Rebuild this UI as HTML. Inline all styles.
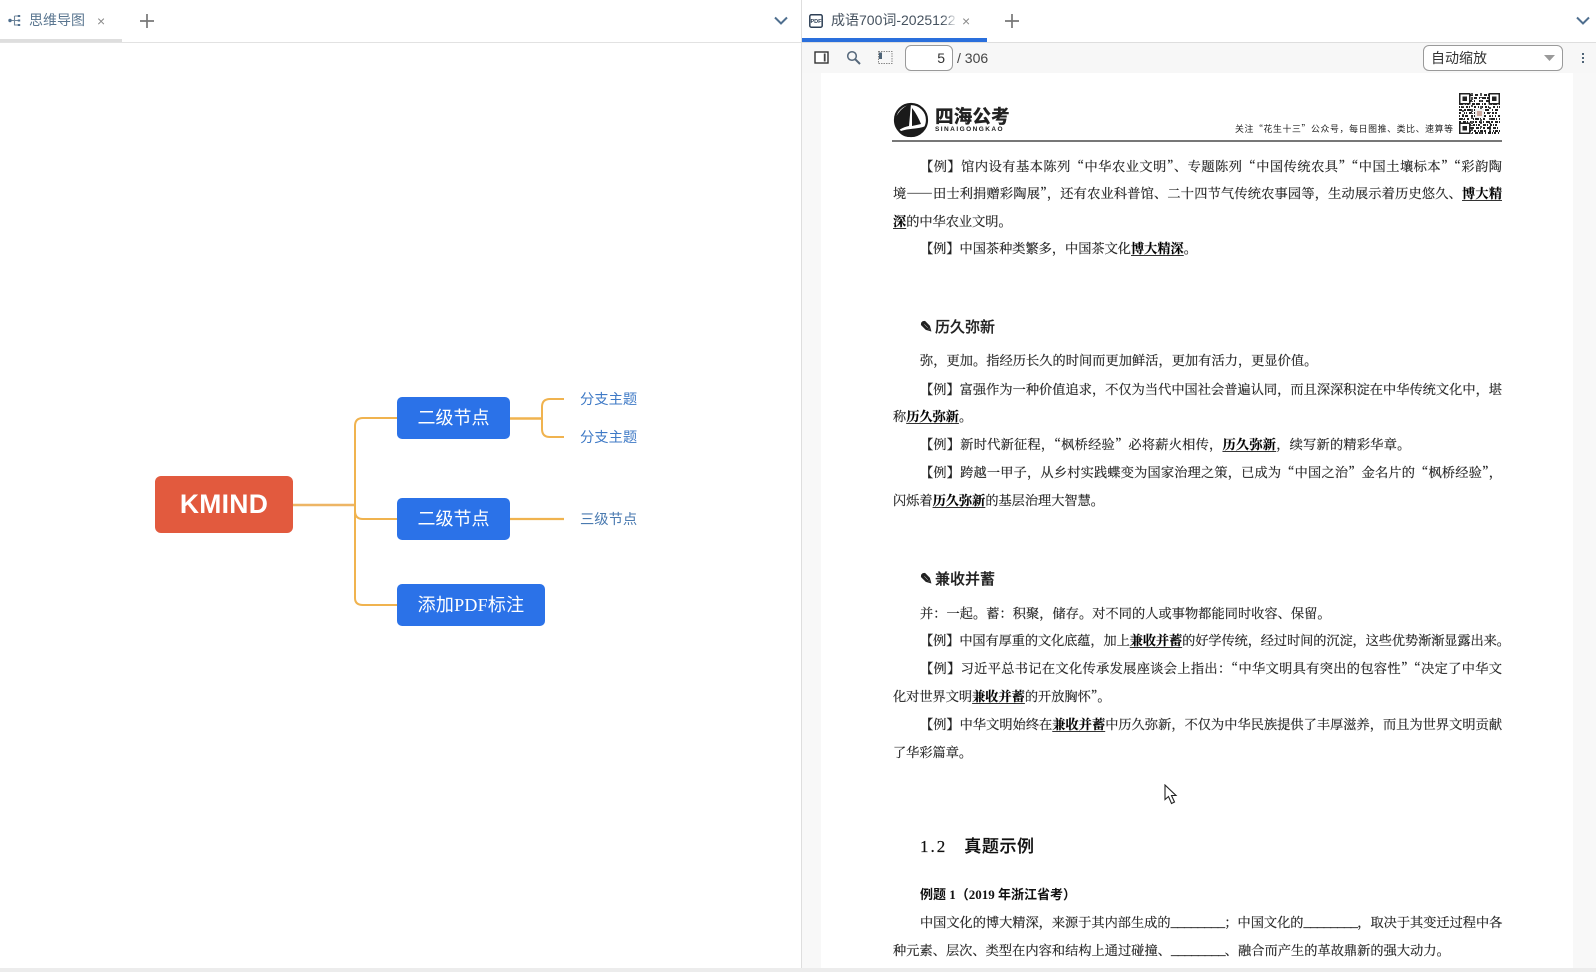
<!DOCTYPE html>
<html lang="zh-CN"><head><meta charset="utf-8"><title>KMIND</title>
<style>
html,body{margin:0;padding:0;width:1596px;height:972px;overflow:hidden;background:#fff}
*{box-sizing:border-box}
body{font-family:"Liberation Sans","Noto Sans CJK SC",sans-serif;position:relative}
.a{position:absolute}
.t{position:absolute;left:893px;width:609px;height:20px;margin-top:-1px;line-height:20px;font-family:"Noto Serif CJK SC","Liberation Serif",serif;font-size:13.2px;color:#222;white-space:nowrap;-webkit-text-stroke:.2px #333;filter:blur(.25px)}
.j{text-align:justify;text-align-last:justify}
.i{left:920px;width:582px}
.t u{font-weight:700;color:#000;text-underline-offset:2px}
.t s{text-decoration:none;letter-spacing:-.7px}
.h{position:absolute;left:920px;height:22px;line-height:22px;font-size:15px;font-weight:500;color:#222;white-space:nowrap;font-family:"Noto Sans CJK SC",sans-serif;-webkit-text-stroke:.2px #222}
.h span{display:inline-block;width:15px;font-family:"DejaVu Sans",sans-serif;font-size:15px;-webkit-text-stroke:.8px #222}
.n{position:absolute;background:#2b72e8;border-radius:5px;color:#fff;font-size:18px;text-align:center;line-height:43px;height:42px;left:397px}
.n b{font:400 18px "Liberation Serif",serif}
.l{position:absolute;left:580px;font-size:14.300px;line-height:20px;color:#3f7ac6;white-space:nowrap}
</style></head><body>
<!-- left tab bar -->
<div class="a" style="left:0;top:42px;width:801px;height:1px;background:#e2e2e2"></div>
<div class="a" style="left:0;top:39px;width:122px;height:3px;background:#dedede"></div>
<svg class="a" style="left:8px;top:14px" width="14" height="14" viewBox="0 0 14 14"><circle cx="2" cy="6.500" r="1.700" fill="#4f6f8f"/><path d="M3.500 6.500H11M6.500 2H11M6.500 2V11H11" fill="none" stroke="#6f8599" stroke-width="1.100"/><rect x="9.800" y="1" width="2.400" height="2" fill="#4f6f8f"/><rect x="9.800" y="5.500" width="2.400" height="2" fill="#4f6f8f"/><rect x="9.800" y="10" width="2.400" height="2" fill="#4f6f8f"/></svg>
<div class="a" style="left:29px;top:10px;font-size:14px;line-height:21px;color:#5a7690;white-space:nowrap">思维导图</div>
<div class="a" style="left:97px;top:11px;font-size:14px;line-height:20px;color:#8a8a8a">×</div>
<svg class="a" style="left:140px;top:14px" width="14" height="14"><path d="M7 0V14M0 7H14" stroke="#777" stroke-width="1.700"/></svg>
<svg class="a" style="left:773px;top:16px" width="16" height="10"><path d="M2 1.500L8 7.500L14 1.500" fill="none" stroke="#4f6f8f" stroke-width="2"/></svg>
<div class="a" style="left:801px;top:0;width:1px;height:968px;background:#dedede"></div>
<!-- mind map -->
<svg class="a" style="left:0;top:0" width="801" height="972"><g fill="none" stroke="#f0b34f" stroke-width="2">
<path d="M292 505H355" stroke-width="2.400" stroke="#edb565"/>
<path d="M397 418H363Q355 418 355 426V598Q355 605 363 605H397"/>
<path d="M355 511Q355 519 363 519H397"/>
<path d="M510 418.500H542" stroke-width="2.600"/>
<path d="M564 399H550Q542 399 542 407V429Q542 437 550 437H564"/>
<path d="M510 519H564" stroke-width="2.200"/>
</g></svg>
<div class="a" style="left:155px;top:476px;width:138px;height:57px;background:#e25a3e;border-radius:6px;color:#fff;font-weight:700;font-size:26.500px;text-align:center;line-height:57px;letter-spacing:.3px">KMIND</div>
<div class="n" style="top:397px;width:113px">二级节点</div>
<div class="n" style="top:498px;width:113px">二级节点</div>
<div class="n" style="top:584px;width:148px;letter-spacing:.25px">添加<b>PDF</b>标注</div>
<div class="l" style="top:390px">分支主题</div>
<div class="l" style="top:428px">分支主题</div>
<div class="l" style="top:510px;color:#4a7ab0">三级节点</div>
<!-- right tab bar -->
<div class="a" style="left:802px;top:42px;width:794px;height:31px;background:#f7f7f7;border-top:1px solid #dedede"></div>
<div class="a" style="left:802px;top:38px;width:185px;height:4px;background:#2a6fdc"></div>
<svg class="a" style="left:809px;top:14px" width="14" height="14" viewBox="0 0 14 14"><rect x=".8" y=".8" width="12.400" height="12.400" rx="1.500" fill="#fff" stroke="#2d3f55" stroke-width="1.500"/><text x="7" y="9" text-anchor="middle" font-family="Liberation Sans" font-weight="700" font-size="5.500" fill="#2d3f55">PDF</text></svg>
<div class="a" style="left:831px;top:10px;width:125px;overflow:hidden;font-size:14px;line-height:21px;color:#46525f;white-space:nowrap">成语700词-2025122</div>
<div class="a" style="left:942px;top:8px;width:16px;height:24px;background:linear-gradient(90deg,rgba(255,255,255,0),#fff)"></div>
<div class="a" style="left:962px;top:11px;font-size:14px;line-height:20px;color:#8a8a8a">×</div>
<svg class="a" style="left:1005px;top:14px" width="14" height="14"><path d="M7 0V14M0 7H14" stroke="#777" stroke-width="1.700"/></svg>
<svg class="a" style="left:1575px;top:16px" width="16" height="10"><path d="M2 1.500L8 7.500L14 1.500" fill="none" stroke="#4f6f8f" stroke-width="2"/></svg>
<!-- toolbar -->
<svg class="a" style="left:814px;top:51px" width="15" height="13"><rect x="1" y="1" width="13" height="11" fill="#fff" stroke="#333" stroke-width="1.400"/><rect x="9.800" y="2.500" width="1.800" height="8" fill="#444"/></svg>
<svg class="a" style="left:846px;top:50px" width="15" height="15"><circle cx="6" cy="6" r="4.300" fill="none" stroke="#55677a" stroke-width="1.500"/><path d="M9.300 9.300L14 14" stroke="#55677a" stroke-width="2"/></svg>
<svg class="a" style="left:878px;top:51px" width="15" height="13"><rect x=".5" y=".5" width="13.500" height="12" fill="none" stroke="#888" stroke-dasharray="1.500 1"/><rect x="1" y="1.500" width="3" height="6.500" fill="#4f6477"/></svg>
<div class="a" style="left:905px;top:45px;width:48px;height:26px;background:#fff;border:1px solid #9a9a9a;border-radius:6px;text-align:right;padding-right:7px;font-size:14px;line-height:24px;color:#333">5</div>
<div class="a" style="left:957px;top:47px;font-size:14px;line-height:22px;color:#444">/ 306</div>
<div class="a" style="left:1423px;top:45px;width:140px;height:26px;background:#fff;border:1px solid #9a9a9a;border-radius:6px;padding-left:7px;font-size:14px;line-height:24px;color:#333">自动缩放</div>
<svg class="a" style="left:1544px;top:55px" width="12" height="7"><path d="M0 0H11L5.500 6Z" fill="#9a9a9a"/></svg>
<svg class="a" style="left:1581px;top:53px" width="4" height="11"><rect x="1" y="0" width="2" height="2" fill="#4f6477"/><rect x="1" y="4" width="2" height="2" fill="#4f6477"/><rect x="1" y="8" width="2" height="2" fill="#4f6477"/></svg>
<!-- pdf viewer -->
<div class="a" style="left:802px;top:73px;width:794px;height:895px;background:#f8f8f8"></div>
<div class="a" style="left:821px;top:73px;width:752px;height:895px;background:#fff"></div>
<div class="a" style="left:0;top:968px;width:1596px;height:4px;background:#ececec"></div>
<!-- logo -->
<svg class="a" style="left:893px;top:102px" width="36" height="36" viewBox="0 0 36 36"><circle cx="18" cy="18" r="16" fill="none" stroke="#1a1a1a" stroke-width="2.200"/><path d="M18 2L16 24C11 25 7 27 5 29C3 24 2 19 3 15C6 9 11 4 18 2Z" fill="#1a1a1a"/><path d="M19 6C23 11 26 17 28 22L19 24ZM6 30C13 26 22 28 33 24C31 31 24 35 17 35C12 35 8 33 6 30Z" fill="#1a1a1a"/></svg>
<div class="a" style="left:935px;top:104px;width:75px;font-size:18.700px;line-height:23px;font-weight:900;color:#222;white-space:nowrap;font-family:'Noto Sans CJK SC',sans-serif">四海公考</div>
<div class="a" style="left:935px;top:126px;width:75px;font-size:6.500px;line-height:8px;font-weight:700;color:#222;letter-spacing:1.450px;white-space:nowrap">SINAIGONGKAO</div>
<div class="a" style="left:1235px;top:122px;width:218px;font-family:'Noto Sans CJK SC',sans-serif;font-size:8.900px;line-height:14px;color:#222;white-space:nowrap;text-align:justify;text-align-last:justify">关注“花生十三”公众号，每日图推、类比、速算等</div>
<!-- QR -->
<svg class="a" style="left:1459px;top:93px;filter:blur(.35px)" width="41" height="41" viewBox="0 0 41 41" shape-rendering="crispEdges">
<g fill="none" stroke="#222" stroke-width="1.800">
<path d="M0 2H41" stroke-dasharray="3 1 2 2 1 1 4 2 3 2 1 3"/><path d="M0 5H41" stroke-dasharray="1 2 4 1 2 3 1 1 3 2"/><path d="M0 8H41" stroke-dasharray="2 1 1 3 3 1 2 2 1 4"/>
<path d="M0 11H41" stroke-dasharray="4 2 1 1 2 3 3 1"/><path d="M0 14H41" stroke-dasharray="1 1 3 2 2 1 1 4 2 2"/><path d="M0 17H41" stroke-dasharray="3 2 2 1 4 3 1 2"/>
<path d="M0 20H41" stroke-dasharray="2 3 1 1 1 2 3 2 2 1"/><path d="M0 23H41" stroke-dasharray="1 2 2 1 3 3 2 1 1 2"/><path d="M0 26H41" stroke-dasharray="4 1 1 2 2 4 1 1"/>
<path d="M0 29H41" stroke-dasharray="2 2 3 1 1 2 4 1"/><path d="M0 32H41" stroke-dasharray="1 1 2 3 3 1 1 2 2 1"/><path d="M0 35H41" stroke-dasharray="3 1 1 2 2 2 4 2"/><path d="M0 38H41" stroke-dasharray="2 2 1 1 3 1 2 3"/><path d="M0 40H41" stroke-dasharray="1 2 3 1 1 1 2 2"/>
<path d="M4 0V41" stroke-dasharray="1 3 2 2 1 4" stroke="#555"/><path d="M13 0V41" stroke-dasharray="2 2 3 1 1 3" stroke="#555"/><path d="M22 0V41" stroke-dasharray="3 1 1 2 2 4" stroke="#555"/><path d="M31 0V41" stroke-dasharray="1 2 2 3 1 2" stroke="#555"/>
</g>
<g fill="#fff" stroke="#222" stroke-width="1.600"><rect x="0.800" y="0.800" width="10" height="10"/><rect x="30.200" y="0.800" width="10" height="10"/><rect x="0.800" y="30.200" width="10" height="10"/></g>
<g fill="#222"><rect x="3.500" y="3.500" width="4.500" height="4.500"/><rect x="33" y="3.500" width="4.500" height="4.500"/><rect x="3.500" y="33" width="4.500" height="4.500"/></g>
<rect x="16" y="16" width="9" height="9" fill="#eee"/><rect x="18" y="18" width="5" height="5" fill="#c9a9a0"/>
</svg>
<div class="a" style="left:892px;top:140px;width:610px;height:2px;background:#777"></div>
<!-- doc text -->
<div class="t i j" style="top:157px">【例】馆内设有基本陈列“中华农业文明”、专题陈列“中国传统农具”“中国土壤标本”“彩韵陶</div>
<div class="t j" style="top:184px">境——田士利捐赠彩陶展”，还有农业科普馆、二十四节气传统农事园等，生动展示着历史悠久、<u>博大精</u></div>
<div class="t" style="top:212px"><u>深</u>的中华农业文明。</div>
<div class="t i" style="top:239px">【例】中国茶种类繁多，中国茶文化<u>博大精深</u>。</div>
<div class="h" style="top:316px"><span>✎</span>历久弥新</div>
<div class="t i" style="top:351px;letter-spacing:.06px">弥，更加。指经历长久的时间而更加鲜活，更加有活力，更显价值。</div>
<div class="t i j" style="top:380px">【例】富强作为一种价值追求，不仅为当代中国社会普遍认同，而且深深积淀在中华传统文化中，堪</div>
<div class="t" style="top:407px">称<u>历久弥新</u>。</div>
<div class="t i" style="top:435px;letter-spacing:.25px">【例】新时代新征程，“枫桥经验”必将薪火相传，<u>历久弥新</u>，续写新的精彩华章。</div>
<div class="t i j" style="top:463px">【例】跨越一甲子，从乡村实践蝶变为国家治理之策，已成为“中国之治”金名片的“枫桥经验”，</div>
<div class="t" style="top:491px">闪烁着<u>历久弥新</u>的基层治理大智慧。</div>
<div class="h" style="top:568px"><span>✎</span>兼收并蓄</div>
<div class="t i" style="top:604px;letter-spacing:.06px">并：一起。蓄：积聚，储存。对不同的人或事物都能同时收容、保留。</div>
<div class="t i" style="top:631px;letter-spacing:-.08px">【例】中国有厚重的文化底蕴，加上<u>兼收并蓄</u>的好学传统，经过时间的沉淀，这些优势渐渐显露出来。</div>
<div class="t i j" style="top:659px">【例】习近平总书记在文化传承发展座谈会上指出：“中华文明具有突出的包容性”“决定了中华文</div>
<div class="t" style="top:687px">化对世界文明<u>兼收并蓄</u>的开放胸怀”。</div>
<div class="t i j" style="top:715px">【例】中华文明始终在<u>兼收并蓄</u>中历久弥新，不仅为中华民族提供了丰厚滋养，而且为世界文明贡献</div>
<div class="t" style="top:743px">了华彩篇章。</div>
<div class="a" style="left:920px;top:835px;font-size:17px;line-height:24px;font-weight:500;color:#111;white-space:nowrap;font-family:'Liberation Serif','Noto Sans CJK SC',serif;letter-spacing:.6px;-webkit-text-stroke:.2px #111"><span style="letter-spacing:2px">1.2</span><span style="display:inline-block;width:17px"></span>真题示例</div>
<div class="a" style="left:920px;top:885px;font-size:13px;line-height:20px;font-weight:700;color:#111;white-space:nowrap;font-family:'Liberation Serif','Noto Sans CJK SC',serif">例题 1（2019 年浙江省考）</div>
<div class="t i j" style="top:913px">中国文化的博大精深，来源于其内部生成的<s>________</s>；中国文化的<s>________</s>，取决于其变迁过程中各</div>
<div class="t" style="top:941px;letter-spacing:.05px">种元素、层次、类型在内容和结构上通过碰撞、<s>________</s>、融合而产生的革故鼎新的强大动力。</div>
<!-- cursor -->
<svg class="a" style="left:1164px;top:784px" width="15" height="21" viewBox="0 0 15 21"><path d="M1 1V15.500L4.500 12.500L7.500 19.500L10.500 18L7.500 11.500H12Z" fill="#fff" stroke="#222" stroke-width="1.100"/></svg>
</body></html>
